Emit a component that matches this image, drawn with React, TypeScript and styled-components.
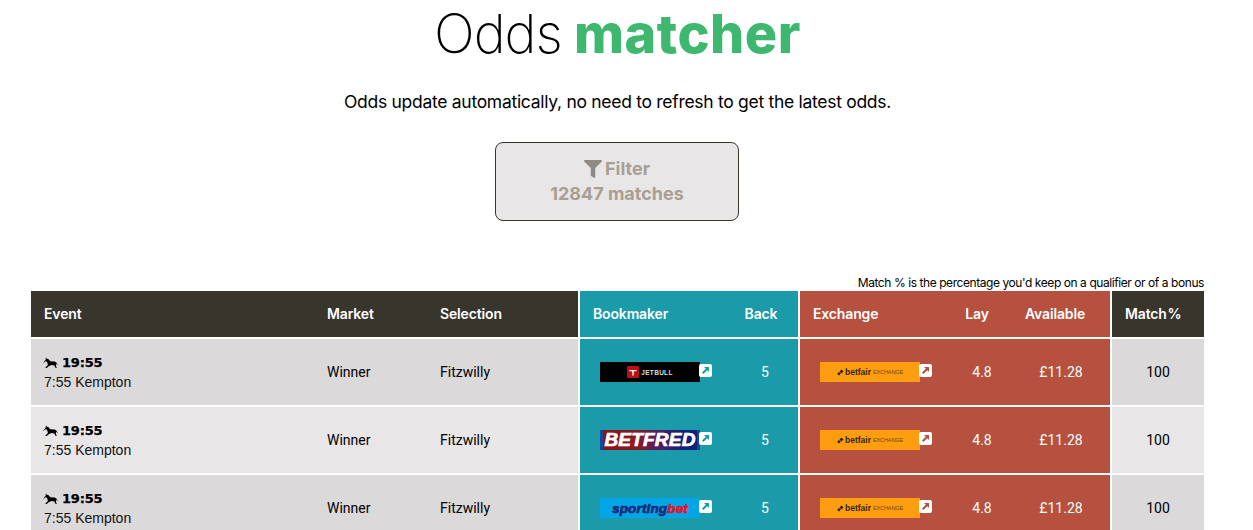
import React from 'react';
import styled, { createGlobalStyle } from 'styled-components';
import { FaFilter } from 'react-icons/fa';

const GlobalStyle = createGlobalStyle`
  html, body {
    margin: 0;
    padding: 0;
    background: #fff;
    overflow: hidden;
    height: 530px;
  }
  body {
    font-family: Inter, "Liberation Sans", sans-serif;
    color: #000;
  }
`;

const Page = styled.div`
  width: 1235px;
  padding: 0 31px;
  box-sizing: border-box;
  height: 530px;
  overflow: hidden;
`;

const Title = styled.h1`
  margin: 0;
  height: 67px;
  line-height: 67px;
  text-align: center;
  font-size: 54px;
  font-weight: 250;
  letter-spacing: -1px;
  word-spacing: -2px;
`;

const Green = styled.span`
  color: #3eb76f;
  font-weight: 800;
  letter-spacing: 0.5px;
`;

const Subtitle = styled.p`
  margin: 23px 0 0;
  text-align: center;
  font-size: 17.5px;
  letter-spacing: -0.29px;
  line-height: 24px;
`;

const FilterButton = styled.button`
  display: block;
  width: 244px;
  height: 79px;
  margin: 28px 0 0 464px;
  background: #e8e6e7;
  border: 1px solid #39352d;
  border-radius: 8px;
  color: #a89f94;
  font-family: inherit;
  font-size: 18px;
  font-weight: 700;
  line-height: 25px;
  padding: 0 0 2px;
`;

const FilterIcon = styled(FaFilter)`
  font-size: 18px;
  color: #8f8a84;
  vertical-align: -3px;
  margin-right: 3px;
`;

const Note = styled.div`
  margin-top: 54px;
  height: 16px;
  line-height: 16px;
  text-align: right;
  font-size: 12px;
  letter-spacing: -0.43px;
`;

const Table = styled.div`
  display: flex;
  flex-direction: column;
  gap: 2px;
  width: 1173px;
`;

const Row = styled.div<{ $head?: boolean }>`
  display: flex;
  gap: 2px;
  height: ${p => (p.$head ? '46px' : '66px')};
`;

const Group = styled.div<{ $bg: string; $cols: string; $w: number; $light?: boolean }>`
  display: grid;
  grid-template-columns: ${p => p.$cols};
  width: ${p => p.$w}px;
  background: ${p => p.$bg};
  color: ${p => (p.$light ? '#fff' : '#000')};
`;

const HeadCell = styled.div<{ $center?: boolean; $shift?: number }>`
  display: flex;
  align-items: center;
  justify-content: ${p => (p.$center ? 'center' : 'flex-start')};
  padding-left: ${p => (p.$center ? 0 : 13)}px;
  padding-right: ${p => p.$shift ?? 0}px;
  padding-bottom: 1px;
  font-size: 14px;
  font-weight: 600;
  letter-spacing: -0.15px;
  word-spacing: -2.5px;
  color: #fff;
  white-space: nowrap;
`;

const Cell = styled.div<{ $center?: boolean }>`
  display: flex;
  align-items: center;
  justify-content: ${p => (p.$center ? 'center' : 'flex-start')};
  padding-left: ${p => (p.$center ? 0 : 13)}px;
  font-family: Roboto, sans-serif;
  font-size: 14px;
  white-space: nowrap;
`;

const EventCell = styled.div`
  display: flex;
  flex-direction: column;
  justify-content: center;
  padding-left: 13px;
  font-family: "Liberation Sans", sans-serif;
  font-size: 14px;
  line-height: 20px;
  color: #111;
`;

const EventTime = styled.div`
  display: flex;
  align-items: center;
  gap: 4px;
  margin: 1px 0 -1px -1px;
  font-family: "DejaVu Sans", sans-serif;
  font-weight: 700;
  font-size: 13px;
  letter-spacing: -0.2px;
  -webkit-text-stroke: 0.25px #000;
  color: #000;
`;

const HorseIcon = styled.svg`
  width: 15px;
  height: 12px;
  flex: none;
`;

const LogoCell = styled.div`
  display: flex;
  align-items: center;
  padding-left: 20px;
`;

const LinkIcon = styled.svg`
  width: 13px;
  height: 13px;
  flex: none;
  margin: -3px 0 0 -1px;
`;

const LogoBox = styled.div`
  width: 100px;
  height: 20px;
  display: flex;
  align-items: center;
  justify-content: center;
  overflow: hidden;
  white-space: nowrap;
  font-family: "Liberation Sans", sans-serif;
  flex: none;
`;

const Jetbull = styled(LogoBox)`
  background: #000;
  color: #ddd;
  font-size: 6.5px;
  font-weight: 700;
  letter-spacing: 0.3px;
  gap: 2px;
`;

const JetbullMark = styled.svg`
  width: 12px;
  height: 12px;
`;

const BetfredBack = styled(LogoBox)`
  background: #0d4a9a;
`;

const BetfredInner = styled.div`
  width: 94px;
  height: 20px;
  display: flex;
  align-items: center;
  justify-content: center;
  background: linear-gradient(90deg, #8e1218 0%, #8b1a1f 35%, #5a1f5c 55%, #10237a 85%);
  color: #fff;
  font-size: 19px;
  font-weight: 700;
  font-style: italic;
  letter-spacing: 0.2px;
  -webkit-text-stroke: 0.7px #fff;
`;

const Sportingbet = styled(LogoBox)`
  background: #02a5e6;
  font-size: 13.5px;
  font-weight: 700;
  font-style: italic;
  color: #142a7a;
  letter-spacing: 0.15px;
  -webkit-text-stroke: 0.7px #142a7a;
`;

const BetRed = styled.span`
  color: #e2132a;
  -webkit-text-stroke: 0.7px #e2132a;
`;

const Betfair = styled(LogoBox)`
  background: #ff9d10;
  color: #33260f;
  font-size: 8.5px;
  font-weight: 700;
  gap: 1px;
`;

const BetfairMark = styled.svg`
  width: 7px;
  height: 7px;
`;

const ExchangeWord = styled.span`
  font-size: 5.5px;
  font-weight: 400;
  margin-left: 1px;
  letter-spacing: -0.1px;
  color: #6a4a12;
`;

const Colours = {
  dark: '#38352c',
  teal: '#1b9aaa',
  red: '#b5513e',
  rowA: '#dbd9da',
  rowB: '#e8e6e7',
};

const COLS = {
  event: '283px 113px 151px',
  book: '152px 66px',
  exch: '152px 60px 98px',
  match: '92px',
};

const Horse = () => (
  <HorseIcon viewBox="0 0 15 12">
    <path
      d="M3 0.5l1 1.2 1.6 0.6 1.6 2 3.5 0.3c1.4 0 2.4 0.5 3.3 1.8l0.8 2.2-1.2-1.3-0.4-0.7-0.3 1.8 0.8 2.6h-1l-1.4-2.6-2.6-0.5-2.6 1-2.4 2.1H2.2l0.5-0.8 2.2-2.2-0.5-2.3-1.1-1.5-1.3 0.3L0.5 6l0-0.8 2-2.1z"
      fill="#000"
    />
  </HorseIcon>
);

const ExternalLink = () => (
  <LinkIcon viewBox="0 0 13 13">
    <path
      fillRule="evenodd"
      d="M2 0h9a2 2 0 0 1 2 2v9a2 2 0 0 1-2 2H2a2 2 0 0 1-2-2V2a2 2 0 0 1 2-2zM5 3l1.8 1.8L3 8.6 4.4 10l3.8-3.8L10 8V3z"
      fill="#fff"
    />
  </LinkIcon>
);

const JetbullLogo = () => (
  <Jetbull>
    <JetbullMark viewBox="0 0 12 12">
      <rect width="12" height="12" rx="1" fill="#b81217" />
      <path d="M2.5 4h7v1.2H6.7V9.5H5.3V5.2H2.5z" fill="#fff" />
    </JetbullMark>
    JETBULL
  </Jetbull>
);

const BetfredLogo = () => (
  <BetfredBack>
    <BetfredInner>BETFRED</BetfredInner>
  </BetfredBack>
);

const SportingbetLogo = () => (
  <Sportingbet>
    sporting<BetRed>bet</BetRed>
  </Sportingbet>
);

const BetfairLogo = () => (
  <Betfair>
    <BetfairMark viewBox="0 0 7 7">
      <path d="M4.5 0.5l2 2-2 2-2-2zM2 3l1.8 1.8L2 6.6.2 4.8z" fill="#2a2010" />
    </BetfairMark>
    betfair
    <ExchangeWord>EXCHANGE</ExchangeWord>
  </Betfair>
);

const rows = [
  { bg: Colours.rowA, logo: <JetbullLogo /> },
  { bg: Colours.rowB, logo: <BetfredLogo /> },
  { bg: Colours.rowA, logo: <SportingbetLogo /> },
];

const App = () => {
  return (
    <Page>
      <GlobalStyle />
      <Title>
        Odds <Green>matcher</Green>
      </Title>
      <Subtitle>Odds update automatically, no need to refresh to get the latest odds.</Subtitle>
      <FilterButton>
        <div>
          <FilterIcon />
          Filter
        </div>
        <div>12847 matches</div>
      </FilterButton>
      <Note>Match % is the percentage you'd keep on a qualifier or of a bonus</Note>
      <Table>
        <Row $head>
          <Group $bg={Colours.dark} $cols={COLS.event} $w={547}>
            <HeadCell>Event</HeadCell>
            <HeadCell>Market</HeadCell>
            <HeadCell>Selection</HeadCell>
          </Group>
          <Group $bg={Colours.teal} $cols={COLS.book} $w={218}>
            <HeadCell>Bookmaker</HeadCell>
            <HeadCell $center $shift={8}>Back</HeadCell>
          </Group>
          <Group $bg={Colours.red} $cols={COLS.exch} $w={310}>
            <HeadCell>Exchange</HeadCell>
            <HeadCell $center $shift={10}>Lay</HeadCell>
            <HeadCell $center $shift={12}>Available</HeadCell>
          </Group>
          <Group $bg={Colours.dark} $cols={COLS.match} $w={92}>
            <HeadCell>Match %</HeadCell>
          </Group>
        </Row>
        {rows.map((r, i) => (
          <Row key={i}>
            <Group $bg={r.bg} $cols={COLS.event} $w={547}>
              <EventCell>
                <EventTime>
                  <Horse />
                  19:55
                </EventTime>
                <div>7:55 Kempton</div>
              </EventCell>
              <Cell>Winner</Cell>
              <Cell>Fitzwilly</Cell>
            </Group>
            <Group $bg={Colours.teal} $cols={COLS.book} $w={218} $light>
              <LogoCell>
                {r.logo}
                <ExternalLink />
              </LogoCell>
              <Cell $center>5</Cell>
            </Group>
            <Group $bg={Colours.red} $cols={COLS.exch} $w={310} $light>
              <LogoCell>
                <BetfairLogo />
                <ExternalLink />
              </LogoCell>
              <Cell $center>4.8</Cell>
              <Cell $center>£11.28</Cell>
            </Group>
            <Group $bg={r.bg} $cols={COLS.match} $w={92}>
              <Cell $center>100</Cell>
            </Group>
          </Row>
        ))}
      </Table>
    </Page>
  );
};

export default App;
